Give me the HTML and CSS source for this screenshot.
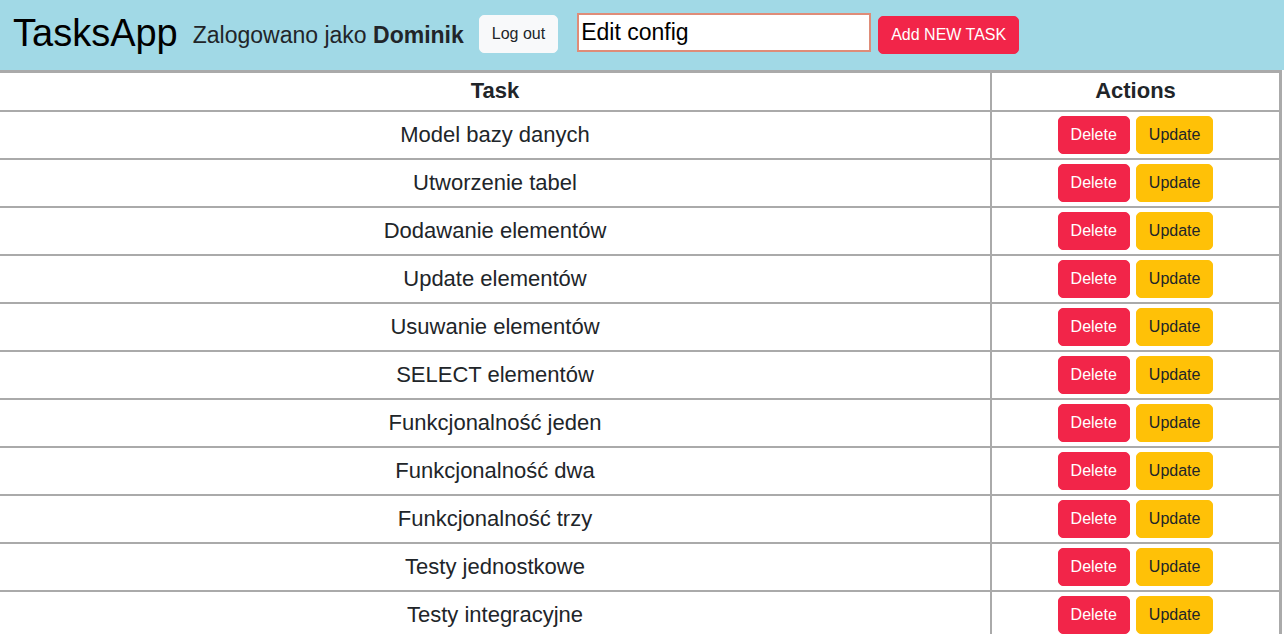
FILE: index.html
```html
<!DOCTYPE html>
<html lang="pl">
<head>
<meta charset="utf-8">
<title>TasksApp</title>
<link rel="stylesheet" href="styles.css">
</head>
<body>
<header class="topbar">
  <h1 class="brand">TasksApp</h1>
  <span class="user">Zalogowano jako <b>Dominik</b></span>
  <button class="btn btn-light">Log out</button>
  <input class="config" type="text" value="Edit config">
  <button class="btn btn-danger add">Add NEW TASK</button>
</header>
<table class="tasks">
  <thead>
    <tr><th class="col-task">Task</th><th class="col-actions">Actions</th></tr>
  </thead>
  <tbody>
    <tr><td>Model bazy danych</td><td><div class="actions"><button class="btn btn-danger">Delete</button><button class="btn btn-warning">Update</button></div></td></tr>
    <tr><td>Utworzenie tabel</td><td><div class="actions"><button class="btn btn-danger">Delete</button><button class="btn btn-warning">Update</button></div></td></tr>
    <tr><td>Dodawanie elementów</td><td><div class="actions"><button class="btn btn-danger">Delete</button><button class="btn btn-warning">Update</button></div></td></tr>
    <tr><td>Update elementów</td><td><div class="actions"><button class="btn btn-danger">Delete</button><button class="btn btn-warning">Update</button></div></td></tr>
    <tr><td>Usuwanie elementów</td><td><div class="actions"><button class="btn btn-danger">Delete</button><button class="btn btn-warning">Update</button></div></td></tr>
    <tr><td>SELECT elementów</td><td><div class="actions"><button class="btn btn-danger">Delete</button><button class="btn btn-warning">Update</button></div></td></tr>
    <tr><td>Funkcjonalność jeden</td><td><div class="actions"><button class="btn btn-danger">Delete</button><button class="btn btn-warning">Update</button></div></td></tr>
    <tr><td>Funkcjonalność dwa</td><td><div class="actions"><button class="btn btn-danger">Delete</button><button class="btn btn-warning">Update</button></div></td></tr>
    <tr><td>Funkcjonalność trzy</td><td><div class="actions"><button class="btn btn-danger">Delete</button><button class="btn btn-warning">Update</button></div></td></tr>
    <tr><td>Testy jednostkowe</td><td><div class="actions"><button class="btn btn-danger">Delete</button><button class="btn btn-warning">Update</button></div></td></tr>
    <tr><td>Testy integracyjne</td><td><div class="actions"><button class="btn btn-danger">Delete</button><button class="btn btn-warning">Update</button></div></td></tr>
  </tbody>
</table>
</body>
</html>
```
FILE: styles.css
```css
* { box-sizing: border-box; }
html, body { margin: 0; padding: 0; }
body {
  font-family: "Liberation Sans", Arial, sans-serif;
  color: #212529;
  background: #fff;
  width: 1284px;
  overflow: hidden;
}
.topbar {
  height: 70px;
  background: #a1d9e6;
  display: flex;
  align-items: center;
  padding-left: 13px;
}
.brand {
  margin: 0 15px 5px 0;
  font-size: 38px;
  font-weight: 400;
  color: #000;
  line-height: 44px;
}
.user {
  font-size: 23px;
  margin-right: 15px;
}
.user b { font-weight: 700; }
.btn {
  font-family: "Liberation Sans", Arial, sans-serif;
  font-size: 16px;
  line-height: 24px;
  padding: 6px 12px;
  border: 1px solid transparent;
  border-radius: 5px;
  cursor: pointer;
  height: 38px;
}
.btn-light { background: #f8f9fa; color: #212529; border-color: #f8f9fa; margin: 0 19px 2px 0; }
.btn-danger { background: #f22549; color: #fff; border-color: #f22549; }
.btn-warning { background: #ffc107; color: #212529; border-color: #ffc107; }
.config {
  width: 294px;
  height: 39px;
  margin: 0 7px 5px 0;
  border: 2px solid #df8c78;
  background: #fff;
  font-family: "Liberation Sans", Arial, sans-serif;
  font-size: 23px;
  padding: 0 2px;
  color: #000;
  outline: none;
}
.add { margin-top: 0; }
.tasks {
  width: 1282px;
  border-collapse: collapse;
  border-top: 3px solid #aaa;
  border-right: 3px solid #aaa;
  table-layout: fixed;
}
.tasks th, .tasks td {
  border-top: 2px solid #aaa;
  border-bottom: 2px solid #aaa;
  text-align: center;
  vertical-align: middle;
}
.tasks th {
  font-size: 22px;
  font-weight: 700;
  height: 39px;
  padding: 0 4px;
  border-top: 3px solid #aaa;
}
.col-task { width: 991px; border-right: 2px solid #aaa; }
.tasks td:first-child { border-right: 2px solid #aaa; }
.tasks td {
  font-size: 22px;
  height: 48px;
  padding: 4px;
}
.actions {
  display: flex;
  justify-content: center;
  gap: 6px;
}
```
